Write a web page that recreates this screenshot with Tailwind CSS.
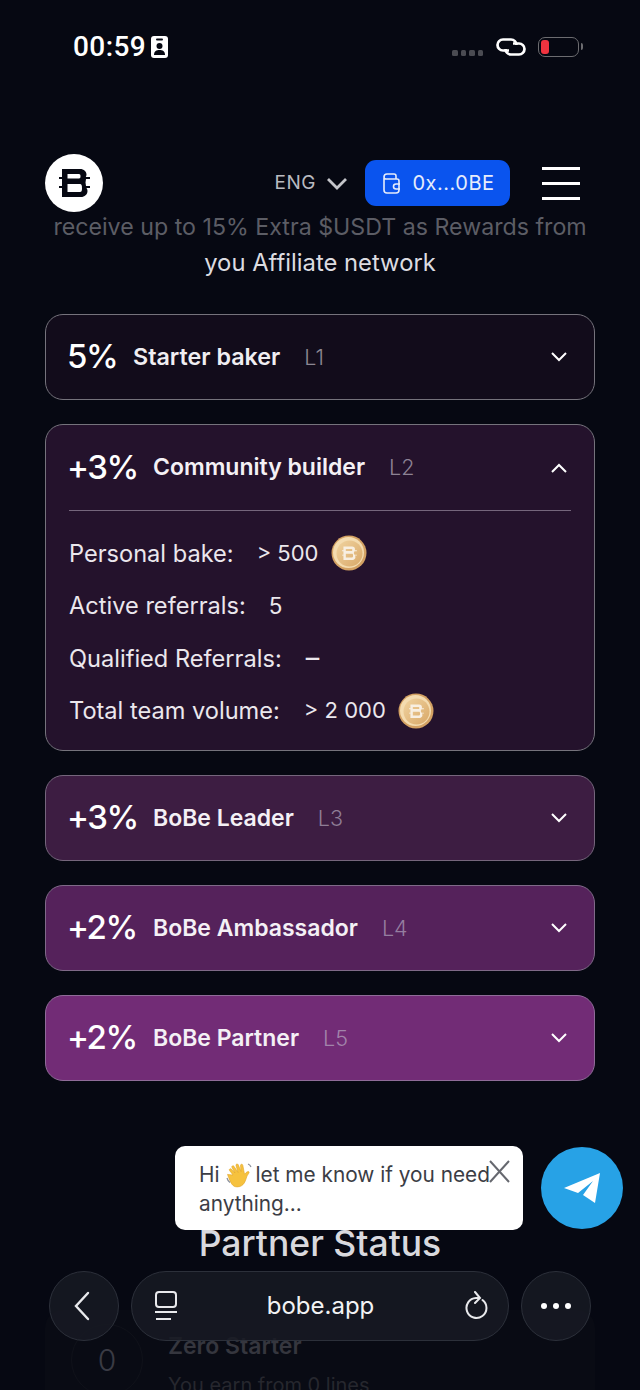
<!DOCTYPE html>
<html lang="en">
<head>
  <meta charset="UTF-8" />
  <meta name="viewport" content="width=device-width, initial-scale=1.0" />
  <title>BoBe</title>
  <script src="https://cdn.jsdelivr.net/npm/@tailwindcss/browser@4"></script>
</head>
<body class="bg-[#060812]">
  <div class="relative w-[640px] h-[1390px] overflow-hidden bg-[#060812] text-white font-['Inter',sans-serif]">

    <!-- status bar -->
    <div class="h-[154px] pt-[32px] pl-[73px] pr-[61px] flex items-start justify-between">
      <div class="flex items-center gap-[5px] h-[30px]">
        <span class="text-[28px] leading-[30px] font-medium font-['Roboto',sans-serif] tracking-[0.4px]">00:59</span>
        <svg width="17" height="22" viewBox="0 0 17 22"><rect width="17" height="22" rx="3" fill="#fff"/><rect x="5" y="2.500" width="7" height="2" rx="1" fill="#060812"/><circle cx="8.500" cy="10" r="3" fill="#060812"/><path d="M3 19c0-4 2.500-5 5.500-5s5.500 1 5.500 5z" fill="#060812"/></svg>
      </div>
      <div class="flex items-center h-[30px]">
        <div class="flex gap-[3px] mt-[12px] mr-[13px]">
          <span class="w-[5.500px] h-[5.500px] rounded-[1.500px] bg-[#4a4b52]"></span>
          <span class="w-[5.500px] h-[5.500px] rounded-[1.500px] bg-[#4a4b52]"></span>
          <span class="w-[5.500px] h-[5.500px] rounded-[1.500px] bg-[#4a4b52]"></span>
          <span class="w-[5.500px] h-[5.500px] rounded-[1.500px] bg-[#4a4b52]"></span>
        </div>
        <svg width="30" height="18" viewBox="0 0 30 18" fill="none" stroke="#fff" stroke-width="2.700" class="mr-[12px]"><path d="M13 12.500H7A5.500 5.500 0 0 1 7 1.500h8a5.500 5.500 0 0 1 5.500 5.500"/><path d="M17 5.500h6a5.500 5.500 0 0 1 0 11h-8a5.500 5.500 0 0 1-5.500-5.500"/></svg>
        <div class="relative w-[41px] h-[20px] rounded-[7px] border-[1.500px] border-[#6c6c70] p-[2px]">
          <div class="w-[8px] h-full rounded-[3px] bg-[#f0333f]"></div>
          <div class="absolute right-[-5px] top-[5px] w-[2.500px] h-[7px] rounded-r-[2px] bg-[#6c6c70]"></div>
        </div>
      </div>
    </div>

    <!-- header -->
    <div class="relative z-10 h-[58px] pl-[45px] pr-[60px] flex items-center">
      <div class="w-[58px] h-[58px] rounded-full bg-white flex items-center justify-center">
        <svg class="ml-[1px]" width="31" height="28" viewBox="0 0 31 28" fill="#060812"><path fill-rule="evenodd" d="M3 0H21C25 0 27.500 2.500 27.500 5.500 27.500 6.500 27.200 7.300 26.800 8H31V10H27L26.500 13.500 27 17H31V19H27.500C28.200 20 28.500 21 28.500 22 28.500 25.500 25.500 28 22 28H3V19H0V17H3V10H0V8H3ZM8.500 5V9.500H20C21 9.500 21.500 8.500 21.500 7.200 21.500 5.800 21 5 20 5ZM8.500 15V23H21C22.500 23 23 22 23 19.500 23 16 22.500 15 21 15Z"/></svg>
      </div>
      <div class="ml-auto flex items-center gap-[10px] text-[#b9bac0] text-[19px] tracking-[0.5px] mt-[1px]">
        <span>ENG</span>
        <svg width="22" height="14" viewBox="0 0 22 14" fill="none" stroke="#c4c5ca" stroke-width="2.800"><path d="M2 2l9 9 9-9"/></svg>
      </div>
      <div class="ml-[17px] w-[145px] h-[46px] rounded-[11px] bg-[#0a54ee] flex items-center justify-center gap-[11px] pl-[2px] text-[20px] text-[#e6ecfb] tracking-[0.5px]">
        <svg width="19" height="21" viewBox="0 0 19 21" fill="none" stroke="#e6ecfb" stroke-width="1.600"><path d="M2 5V17a3 3 0 0 0 3 3h9a3 3 0 0 0 3-3V8a2 2 0 0 0-2-2H4a2 2 0 0 1-2-2 3 3 0 0 1 3-3h7a2 2 0 0 1 2 2v3"/><path d="M18 11h-4a2 2 0 0 0 0 5h4"/></svg>
        <span>0x...0BE</span>
      </div>
      <div class="ml-[32px] w-[38px] flex flex-col gap-[12px]">
        <span class="h-[3px] bg-white"></span>
        <span class="h-[3px] bg-white"></span>
        <span class="h-[3px] bg-white"></span>
      </div>
    </div>

    <!-- intro text, fades under the header -->
    <div class="text-center text-[23.200px] leading-[35px] mb-[34px] mt-[-2px]">
      <p class="text-[#5c5d65] whitespace-nowrap">receive up to 15% Extra $USDT as Rewards from</p>
      <p class="text-[#dcdce0] text-[23.800px]">you Affiliate network</p>
    </div>

    <!-- levels -->
    <div class="mx-[45px] flex flex-col gap-[24px]">
      <div class="h-[86px] rounded-[18px] border border-[#75737c] bg-[#120c1b] px-[23px] flex items-center">
        <span class="text-[33px] font-medium tracking-[-1.500px] -ml-[2px] w-[66px]">5%</span>
        <span class="text-[23.300px] font-semibold text-[#f0eef2]">Starter baker</span>
        <span class="text-[21.500px] font-light text-[#8b8792] ml-[24px]">L1</span>
        <svg class="ml-auto mr-[3px]" width="18" height="12" viewBox="0 0 18 12" fill="none" stroke="#fff" stroke-width="2"><path d="M2 2l7 7 7-7"/></svg>
      </div>

      <div class="h-[327px] rounded-[18px] border border-[#75737c] bg-[#24122c] px-[23px]">
        <div class="h-[86px] border-b border-[#75667c] flex items-center">
          <span class="text-[33px] font-medium tracking-[-1.500px] -ml-[2px] w-[86px]">+3%</span>
          <span class="text-[23px] font-semibold text-[#f4f0f5]">Community builder</span>
          <span class="text-[21.500px] font-light text-[#8d8294] ml-[24px]">L2</span>
          <svg class="ml-auto mr-[3px]" width="18" height="12" viewBox="0 0 18 12" fill="none" stroke="#fff" stroke-width="2"><path d="M2 10l7-7 7 7"/></svg>
        </div>
        <div class="pt-[16px] flex flex-col text-[23.600px] text-[#ebe7ed]">
          <div class="h-[52.500px] flex items-center">
            <span>Personal bake:</span><span class="ml-[23px] text-[22px]">&gt; 500</span>
            <svg class="ml-[12px]" width="36" height="36" viewBox="0 0 36 36"><defs><linearGradient id="coin" x1="0" y1="0" x2="1" y2="1"><stop offset="0" stop-color="#f0d3a0"/><stop offset="1" stop-color="#d9a868"/></linearGradient></defs><circle cx="18" cy="18" r="17.500" fill="#d3a163"/><circle cx="17.500" cy="17.500" r="15.500" fill="#f4dcb0"/><circle cx="18.500" cy="18.500" r="13" fill="url(#coin)"/><path transform="translate(11 11.500) scale(.48)" fill="#f8efe2" fill-rule="evenodd" d="M3 0H21C25 0 27 2.500 27 5.500 27 6.500 26.800 7.300 26.300 8H31V10H26L24.500 13.500 26 17H31V19H27C27.500 20 28 21 28 22 28 25.500 25.500 28 22 28H3V19H0V17H3V10H0V8H3ZM8 5V9.500H20C21 9.500 21.500 8.500 21.500 7.200 21.500 5.800 21 5 20 5ZM8 15V23H21C22.500 23 23 22 23 19.500 23 16 22.500 15 21 15Z"/></svg>
          </div>
          <div class="h-[52.500px] flex items-center">
            <span>Active referrals:</span><span class="ml-[23px] text-[22.500px]">5</span>
          </div>
          <div class="h-[52.500px] flex items-center">
            <span>Qualified Referrals:</span><span class="ml-[24px] text-[27px]">–</span>
          </div>
          <div class="h-[52.500px] flex items-center">
            <span>Total team volume:</span><span class="ml-[24px] text-[22px]">&gt; 2 000</span>
            <svg class="ml-[12px]" width="36" height="36" viewBox="0 0 36 36"><circle cx="18" cy="18" r="17.500" fill="#d3a163"/><circle cx="17.500" cy="17.500" r="15.500" fill="#f4dcb0"/><circle cx="18.500" cy="18.500" r="13" fill="url(#coin)"/><path transform="translate(11 11.500) scale(.48)" fill="#f8efe2" fill-rule="evenodd" d="M3 0H21C25 0 27 2.500 27 5.500 27 6.500 26.800 7.300 26.300 8H31V10H26L24.500 13.500 26 17H31V19H27C27.500 20 28 21 28 22 28 25.500 25.500 28 22 28H3V19H0V17H3V10H0V8H3ZM8 5V9.500H20C21 9.500 21.500 8.500 21.500 7.200 21.500 5.800 21 5 20 5ZM8 15V23H21C22.500 23 23 22 23 19.500 23 16 22.500 15 21 15Z"/></svg>
          </div>
        </div>
      </div>

      <div class="h-[86px] rounded-[18px] border border-[#75667c] bg-[#3d1d42] px-[23px] flex items-center">
        <span class="text-[33px] font-medium tracking-[-1.500px] -ml-[2px] w-[86px]">+3%</span>
        <span class="text-[23px] font-semibold text-[#f4f0f5]">BoBe Leader</span>
        <span class="text-[21.500px] font-light text-[#8f7d96] ml-[24px]">L3</span>
        <svg class="ml-auto mr-[3px]" width="18" height="12" viewBox="0 0 18 12" fill="none" stroke="#fff" stroke-width="2"><path d="M2 2l7 7 7-7"/></svg>
      </div>
      <div class="h-[86px] rounded-[18px] border border-[#7f6a88] bg-[#55225b] px-[23px] flex items-center">
        <span class="text-[33px] font-medium tracking-[-1.500px] -ml-[2px] w-[86px]">+2%</span>
        <span class="text-[23px] font-semibold text-[#f4f0f5]">BoBe Ambassador</span>
        <span class="text-[21.500px] font-light text-[#957ea0] ml-[24px]">L4</span>
        <svg class="ml-auto mr-[3px]" width="18" height="12" viewBox="0 0 18 12" fill="none" stroke="#fff" stroke-width="2"><path d="M2 2l7 7 7-7"/></svg>
      </div>
      <div class="h-[86px] rounded-[18px] border border-[#8f6c98] bg-[#722c76] px-[23px] flex items-center">
        <span class="text-[33px] font-medium tracking-[-1.500px] -ml-[2px] w-[86px]">+2%</span>
        <span class="text-[23px] font-semibold text-[#f4f0f5]">BoBe Partner</span>
        <span class="text-[21.500px] font-light text-[#a284ab] ml-[24px]">L5</span>
        <svg class="ml-auto mr-[3px]" width="18" height="12" viewBox="0 0 18 12" fill="none" stroke="#fff" stroke-width="2"><path d="M2 2l7 7 7-7"/></svg>
      </div>
    </div>

    <!-- partner status, behind the browser bar -->
    <h2 class="mt-[141px] text-center text-[35.500px] leading-[44px] font-medium text-[#d9d9de]">Partner Status</h2>
    <div class="mx-[45px] mt-[44px] h-[120px] rounded-[18px] bg-[#090b14] flex pl-[26px]">
      <div class="mt-[14px] w-[72px] h-[72px] rounded-full border border-[#10121a] flex items-center justify-center text-[30px] font-light text-[#3a3b44]">0</div>
      <div class="ml-[25px] pt-[21px]">
        <p class="text-[23px] leading-[30px] font-semibold text-[#35363e]">Zero Starter</p>
        <p class="text-[20px] leading-[28px] mt-[10px] text-[#26272e]">You earn from 0 lines</p>
      </div>
    </div>

    <!-- chat bubble -->
    <div class="absolute left-[175px] top-[1146px] w-[348px] h-[84px] rounded-[10px] bg-white pl-[24px] pt-[14px] text-[20.800px] leading-[29px] text-[#3b3d45]">
      <div class="flex items-center whitespace-nowrap">
        <span>Hi</span>
        <svg class="ml-[6px] mr-[2px]" width="28" height="27" viewBox="0 0 28 27"><path d="M7 14 3.500 9.500c-.8-1.300 1-2.500 2-1.300L9 12 6 6.500c-.8-1.400 1.200-2.500 2-1.200l4 6.200-2-7c-.4-1.500 1.700-2.200 2.300-.7L15 10.500l-.5-6c0-1.500 2-1.700 2.300-.3l1.700 9c1.500-1.800 3.700-3.500 4.500-2.300.7 1-1.500 2.500-2.300 5-1 3-2.500 10-9.500 10-5 0-6.500-4-9.700-12.500z" fill="#f6c23e" stroke="#e0a52a" stroke-width=".6"/><path d="M22 3c1.500.5 2.500 1.700 3 3M1 17c.5 2 1.500 3.500 3 4.500" fill="none" stroke="#8a8f9a" stroke-width="1.200"/></svg>
        <span>let me know if you need</span>
      </div>
      <div>anything...</div>
      <svg class="absolute right-[13px] top-[14px]" width="21" height="23" viewBox="0 0 21 23" fill="none" stroke="#66686f" stroke-width="2"><path d="M1 1l19 21M20 1 1 22"/></svg>
    </div>

    <!-- telegram button -->
    <div class="absolute left-[541px] top-[1147px] w-[82px] h-[82px] rounded-full bg-[#27a2e6] flex items-center justify-center">
      <svg width="38" height="32" viewBox="0 0 38 32"><path fill="#fff" d="M37 1 1 16l14 5L30 9 20 23l12 8z"/></svg>
    </div>

    <!-- browser bar -->
    <div class="absolute left-[49px] top-[1271px] w-[542px] flex gap-[12px]">
      <div class="w-[70px] h-[70px] rounded-full bg-[#171a23]/85 border border-[#2c303a] flex items-center justify-center">
        <svg class="mr-[4px]" width="18" height="32" viewBox="0 0 18 32" fill="none" stroke="#e8e9ec" stroke-width="2.400" stroke-linecap="round"><path d="M15 3 3 16l12 13"/></svg>
      </div>
      <div class="w-[378px] h-[70px] rounded-full bg-[#171a23]/85 border border-[#2c303a] flex items-center justify-between pl-[22px] pr-[19px]">
        <svg width="24" height="32" viewBox="0 0 24 32" fill="none" stroke="#e8e9ec" stroke-width="2"><rect x="2" y="2" width="20" height="15" rx="3"/><path d="M1 22h22M2 29h15"/></svg>
        <span class="text-[24px] text-[#f2f2f4] mr-[2px]">bobe.app</span>
        <svg width="24" height="30" viewBox="0 0 24 30" fill="none" stroke="#e8e9ec" stroke-width="2" stroke-linecap="round"><path d="M17.500 9A10 10 0 1 1 11 7h3"/><path d="M10 1l5 6-5 5"/></svg>
      </div>
      <div class="w-[70px] h-[70px] rounded-full bg-[#171a23]/85 border border-[#2c303a] flex items-center justify-center gap-[6px]">
        <span class="w-[6px] h-[6px] rounded-full bg-white"></span>
        <span class="w-[6px] h-[6px] rounded-full bg-white"></span>
        <span class="w-[6px] h-[6px] rounded-full bg-white"></span>
      </div>
    </div>
  </div>
</body>
</html>
